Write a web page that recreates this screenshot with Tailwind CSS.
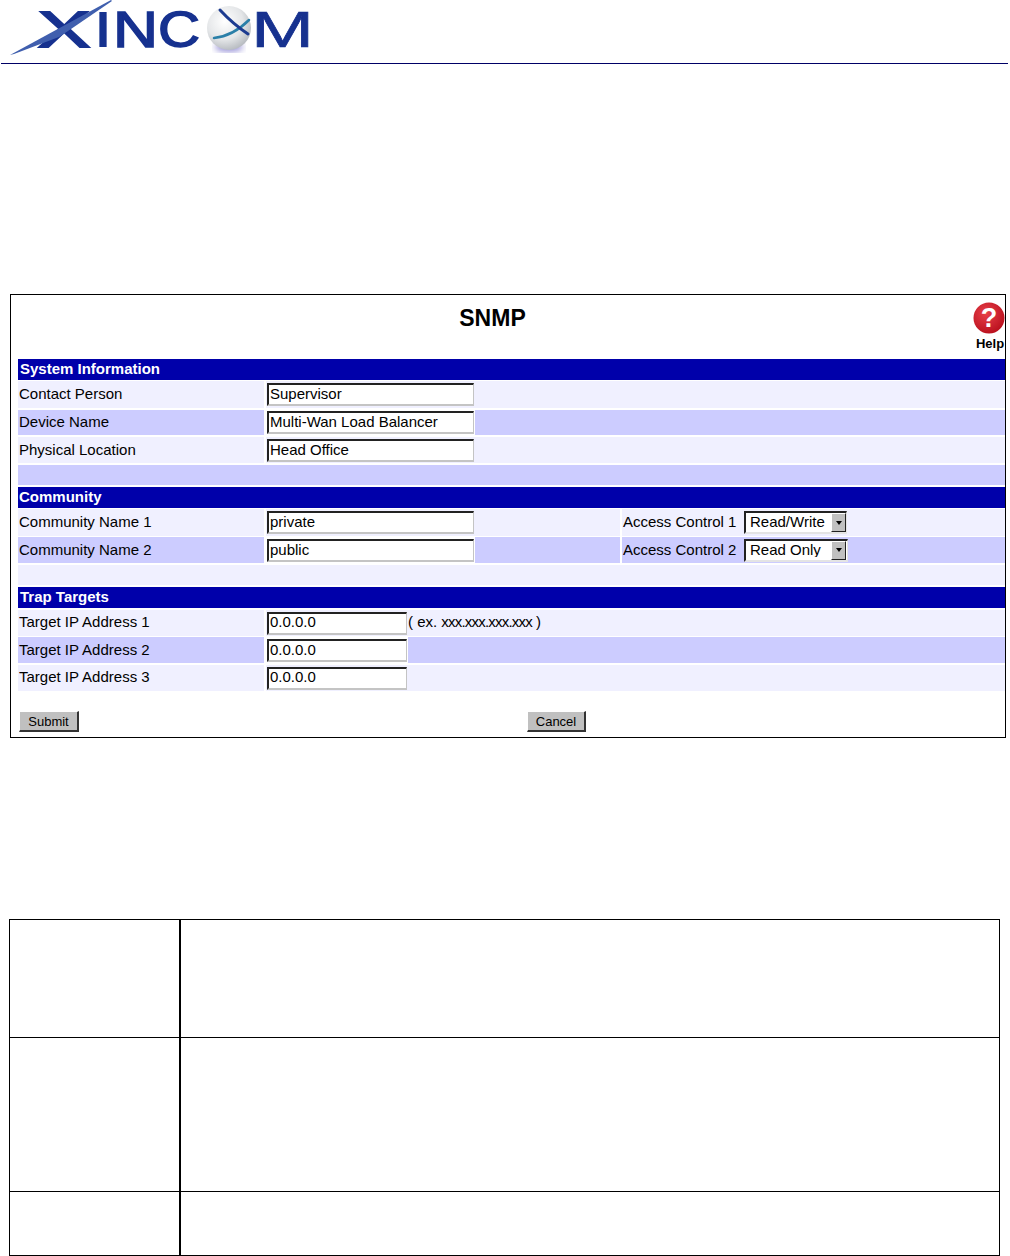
<!DOCTYPE html>
<html lang="en">
<head>
  <meta charset="UTF-8" />
  <title>SNMP</title>
  <script src="https://cdn.jsdelivr.net/npm/@tailwindcss/browser@4"></script>
</head>
<body class="bg-white text-black h-[1256px] overflow-hidden font-['Liberation_Sans',Arial,sans-serif] text-[15px] leading-none">

  <!-- logo header -->
  <header class="h-[64px] ml-px mr-[2px] border-b border-[#000066]">
    <svg width="340" height="63" viewBox="0 0 340 63" class="block">
      <defs>
        <radialGradient id="ball" cx="0.4" cy="0.35" r="0.75">
          <stop offset="0" stop-color="#ffffff" />
          <stop offset="0.55" stop-color="#e4e6e8" />
          <stop offset="1" stop-color="#a9aeb4" />
        </radialGradient>
        <filter id="soft"><feGaussianBlur stdDeviation="0.5" /></filter>
        <filter id="glow"><feGaussianBlur stdDeviation="3" /></filter>
      </defs>
      <g filter="url(#soft)" fill="#15308f" stroke="#15308f" font-size="50">
        <text x="37" y="47" textLength="52" lengthAdjust="spacingAndGlyphs" stroke-width="2">X</text>
        <text x="95" y="47" textLength="14" lengthAdjust="spacingAndGlyphs" font-weight="700" stroke-width="0">I</text>
        <text x="112" y="47" textLength="45" lengthAdjust="spacingAndGlyphs" stroke-width="1.5">N</text>
        <text x="157" y="47" textLength="42" lengthAdjust="spacingAndGlyphs" stroke-width="1.5">C</text>
        <text x="250" y="47" textLength="63" lengthAdjust="spacingAndGlyphs" stroke-width="0.6">M</text>
        <polygon points="9,55 110,0 111,1 70,29 58,37 13,54" fill="#3f5fae" stroke-width="0" />
      </g>
      <ellipse cx="228" cy="47" rx="14" ry="5" fill="#9a94d8" filter="url(#glow)" />
      <circle cx="228" cy="28" r="22" fill="url(#ball)" filter="url(#soft)" />
      <g filter="url(#soft)" fill="none" stroke-linecap="round">
        <path d="M213 38 Q232 36 248 20" stroke="#2a7fa8" stroke-width="2.5" />
        <path d="M219 10 Q232 24 247 34" stroke="#1c3a90" stroke-width="3" />
      </g>
    </svg>
  </header>

  <!-- SNMP form panel -->
  <section class="mt-[230px] ml-[10px] w-[996px] h-[444px] border border-black pl-[7px] overflow-hidden">
    <div class="h-[64px] relative flex justify-center">
      <h1 class="pt-[12px] pr-[38px] text-[23px] font-bold">SNMP</h1>
      <div class="absolute right-0 top-[7px] w-[33px] flex flex-col items-center">
        <svg width="32" height="32" viewBox="0 0 32 32" class="block">
          <defs>
            <radialGradient id="red" cx="0.4" cy="0.35" r="0.7">
              <stop offset="0" stop-color="#e8404a" />
              <stop offset="1" stop-color="#b80f1c" />
            </radialGradient>
          </defs>
          <circle cx="16" cy="16" r="15.5" fill="url(#red)" />
          <text x="16" y="25" text-anchor="middle" fill="#ffffff" font-size="27" font-weight="700">?</text>
        </svg>
        <span class="text-[13px] font-bold mt-[3px] ml-[3px]">Help</span>
      </div>
    </div>

    <div class="h-[21px] bg-[#0000aa] text-white font-bold flex items-center pl-[2px] pb-[2px]">System Information</div>

    <div class="mt-px h-[27px] bg-[#f0f0ff] flex">
      <div class="w-[246px] pl-[1px] pb-[2px] flex items-center">Contact Person</div>
      <div class="w-[2px] bg-white"></div>
      <div class="flex-1 flex items-center pl-px"><input value="Supervisor" class="w-[207px] h-[23px] bg-white pl-[1px] pb-[2px] border-2 border-t-[#222] border-l-[#222] border-r-[#c4c4c4] border-b-[#c4c4c4] border-r-[1px] outline-none"></div>
    </div>
    <div class="mt-[2px] h-[25px] bg-[#ccccff] flex">
      <div class="w-[246px] pl-[1px] pb-[2px] flex items-center">Device Name</div>
      <div class="w-[2px] bg-white"></div>
      <div class="flex-1 flex items-center"><div class="bg-white pl-px pr-px h-full flex items-center"><input value="Multi-Wan Load Balancer" class="w-[207px] h-[23px] bg-white pl-[1px] pb-[2px] border-2 border-t-[#222] border-l-[#222] border-r-[#c4c4c4] border-b-[#c4c4c4] border-r-[1px] outline-none"></div></div>
    </div>
    <div class="mt-[2px] h-[26px] bg-[#f0f0ff] flex">
      <div class="w-[246px] pl-[1px] pb-px flex items-center">Physical Location</div>
      <div class="w-[2px] bg-white"></div>
      <div class="flex-1 flex items-center pl-px"><input value="Head Office" class="w-[207px] h-[23px] bg-white pl-[1px] pb-[2px] border-2 border-t-[#222] border-l-[#222] border-r-[#c4c4c4] border-b-[#c4c4c4] border-r-[1px] outline-none"></div>
    </div>
    <div class="mt-[2px] h-[20px] bg-[#ccccff]"></div>

    <div class="mt-[2px] h-[21px] bg-[#0000aa] text-white font-bold flex items-center pl-[1px] pb-[2px]">Community</div>

    <div class="mt-px h-[27px] bg-[#f0f0ff] flex">
      <div class="w-[246px] pl-[1px] pb-[2px] flex items-center">Community Name 1</div>
      <div class="w-[2px] bg-white"></div>
      <div class="w-[354px] flex items-center pl-px"><input value="private" class="w-[207px] h-[23px] bg-white pl-[1px] pb-[2px] border-2 border-t-[#222] border-l-[#222] border-r-[#c4c4c4] border-b-[#c4c4c4] border-r-[1px] outline-none"></div>
      <div class="w-[2px] bg-white"></div>
      <div class="flex-1 flex items-center pl-[1px]">
        <span class="w-[121px] pb-[2px]">Access Control 1</span>
        <div class="relative w-[103px] h-[23px]">
          <select class="w-full h-full appearance-none bg-white pl-[4px] pb-[2px] border-2 border-t-[#222] border-l-[#222] border-r-[#e4e4e4] border-b-[#e4e4e4] border-r-[1px] outline-none"><option>Read/Write</option></select>
          <span class="absolute right-[1px] top-[2px] w-[15px] h-[19px] bg-[#c0c0c0] border border-t-white border-l-white border-r-[#222] border-b-[#222] flex items-center justify-center"><span class="w-0 h-0 border-x-[3px] border-x-transparent border-t-[4px] border-t-black"></span></span>
        </div>
      </div>
    </div>
    <div class="mt-px h-[26px] bg-[#ccccff] flex">
      <div class="w-[246px] pl-[1px] pb-px flex items-center">Community Name 2</div>
      <div class="w-[2px] bg-white"></div>
      <div class="w-[354px] flex items-center"><div class="bg-white pl-px pr-px h-full flex items-center"><input value="public" class="w-[207px] h-[23px] bg-white pl-[1px] pb-[2px] border-2 border-t-[#222] border-l-[#222] border-r-[#c4c4c4] border-b-[#c4c4c4] border-r-[1px] outline-none"></div></div>
      <div class="w-[2px] bg-white"></div>
      <div class="flex-1 flex items-center pl-[1px]">
        <span class="w-[121px] pb-px">Access Control 2</span>
        <div class="relative w-[104px] h-[23px]">
          <select class="w-full h-full appearance-none bg-white pl-[4px] pb-[2px] border-2 border-t-[#222] border-l-[#222] border-r-[#e4e4e4] border-b-[#e4e4e4] border-r-[1px] outline-none"><option>Read Only</option></select>
          <span class="absolute right-[2px] top-[2px] w-[15px] h-[19px] bg-[#c0c0c0] border border-t-white border-l-white border-r-[#222] border-b-[#222] flex items-center justify-center"><span class="w-0 h-0 border-x-[3px] border-x-transparent border-t-[4px] border-t-black"></span></span>
        </div>
      </div>
    </div>
    <div class="mt-[2px] h-[20px] bg-[#f0f0ff]"></div>

    <div class="mt-[2px] h-[21px] bg-[#0000aa] text-white font-bold flex items-center pl-[2px] pb-[2px]">Trap Targets</div>

    <div class="mt-[2px] h-[26px] bg-[#f0f0ff] flex">
      <div class="w-[246px] pl-[1px] pb-[3px] flex items-center">Target IP Address 1</div>
      <div class="w-[2px] bg-white"></div>
      <div class="flex-1 flex items-center pl-px"><input value="0.0.0.0" class="w-[140px] h-[23px] bg-white pl-[1px] pb-[4px] border-2 border-t-[#222] border-l-[#222] border-r-[#c4c4c4] border-b-[#c4c4c4] border-r-[1px] outline-none"><span class="ml-[1px] pb-[3px]">( ex. <span class="tracking-[-0.8px]">xxx.xxx.xxx.xxx</span> )</span></div>
    </div>
    <div class="mt-px h-[26px] bg-[#ccccff] flex">
      <div class="w-[246px] pl-[1px] pb-px flex items-center">Target IP Address 2</div>
      <div class="w-[2px] bg-white"></div>
      <div class="flex-1 flex items-center"><div class="bg-white pl-px pr-px h-full flex items-center"><input value="0.0.0.0" class="w-[140px] h-[23px] bg-white pl-[1px] pb-[2px] border-2 border-t-[#222] border-l-[#222] border-r-[#c4c4c4] border-b-[#c4c4c4] border-r-[1px] outline-none"></div></div>
    </div>
    <div class="mt-[2px] h-[26px] bg-[#f0f0ff] flex">
      <div class="w-[246px] pl-[1px] pb-[3px] flex items-center">Target IP Address 3</div>
      <div class="w-[2px] bg-white"></div>
      <div class="flex-1 flex items-center pl-px"><input value="0.0.0.0" class="w-[140px] h-[23px] bg-white pl-[1px] pb-[4px] border-2 border-t-[#222] border-l-[#222] border-r-[#c4c4c4] border-b-[#c4c4c4] border-r-[1px] outline-none"></div>
    </div>

    <div class="mt-[20px] flex pl-px">
      <button class="w-[60px] h-[21px] bg-[#c0c0c0] text-[13px] border-2 border-t-white border-l-white border-r-[#333] border-b-[#333] border-t-[1px] border-l-[1px]">Submit</button>
      <button class="ml-[448px] w-[59px] h-[21px] bg-[#c0c0c0] text-[13px] border-2 border-t-white border-l-white border-r-[#333] border-b-[#333] border-t-[1px] border-l-[1px]">Cancel</button>
    </div>
  </section>

  <!-- empty description table -->
  <section class="mt-[181px] ml-[9px] w-[991px] border border-black">
    <div class="h-[118px] flex border-b border-black"><div class="w-[171px] border-r-2 border-black"></div><div class="flex-1"></div></div>
    <div class="h-[154px] flex border-b border-black"><div class="w-[171px] border-r-2 border-black"></div><div class="flex-1"></div></div>
    <div class="h-[63px] flex"><div class="w-[171px] border-r-2 border-black"></div><div class="flex-1"></div></div>
  </section>
</body>
</html>
